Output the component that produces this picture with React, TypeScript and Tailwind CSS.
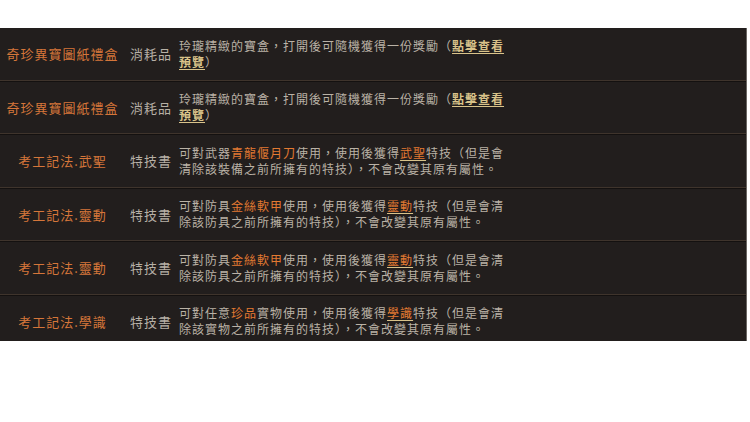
import type { ReactNode } from "react";

type Row = { name: string; kind: string; lines: [ReactNode, ReactNode] };

const hl = (t: string) => <span className="text-[#e27a32]">{t}</span>;
const link = (t: string) => (
  <span className="font-bold text-[#d9c38a] underline decoration-[#d9c38a] underline-offset-2">{t}</span>
);
const skill = (t: string) => (
  <span className="text-[#e27a32] underline decoration-[#d9c38a] underline-offset-2">{t}</span>
);

const gift: [ReactNode, ReactNode] = [
  <>玲瓏精緻的寶盒，打開後可隨機獲得一份獎勵（{link("點擊查看")}</>,
  <>{link("預覽")}）</>,
];

const ROWS: Row[] = [
  { name: "奇珍異寶圖紙禮盒", kind: "消耗品", lines: gift },
  { name: "奇珍異寶圖紙禮盒", kind: "消耗品", lines: gift },
  {
    name: "考工記法.武聖",
    kind: "特技書",
    lines: [
      <>可對武器{hl("青龍偃月刀")}使用，使用後獲得{skill("武聖")}特技（但是會</>,
      <>清除該裝備之前所擁有的特技），不會改變其原有屬性。</>,
    ],
  },
  {
    name: "考工記法.靈動",
    kind: "特技書",
    lines: [
      <>可對防具{hl("金絲軟甲")}使用，使用後獲得{skill("靈動")}特技（但是會清</>,
      <>除該防具之前所擁有的特技），不會改變其原有屬性。</>,
    ],
  },
  {
    name: "考工記法.靈動",
    kind: "特技書",
    lines: [
      <>可對防具{hl("金絲軟甲")}使用，使用後獲得{skill("靈動")}特技（但是會清</>,
      <>除該防具之前所擁有的特技），不會改變其原有屬性。</>,
    ],
  },
  {
    name: "考工記法.學識",
    kind: "特技書",
    lines: [
      <>可對任意{hl("珍品")}實物使用，使用後獲得{skill("學識")}特技（但是會清</>,
      <>除該實物之前所擁有的特技），不會改變其原有屬性。</>,
    ],
  },
];

export default function App() {
  return (
    <div
      className="h-[422px] w-[750px] bg-white pt-[28px]"
      style={{ fontFamily: '"Noto Sans CJK TC", "Noto Sans CJK SC", sans-serif' }}
    >
      <div className="h-[313px] w-[747px] overflow-hidden border-r border-[#6a6663] bg-[#221e1d]">
        {ROWS.map((r, i) => (
          <div key={i}>
            <div className="flex h-[51.5px] items-center">
              <div className="w-[125px] text-center text-[13px] tracking-[1px] text-[#d5763a]">{r.name}</div>
              <div className="w-[54px] pl-[5px] text-[13px] tracking-[1px] text-[#b7b0a6]">{r.kind}</div>
              <div className="flex w-[340px] flex-col text-[12px] leading-[16px] tracking-[1px] text-[#bab2a6]">
                <div className="whitespace-nowrap">{r.lines[0]}</div>
                <div className="whitespace-nowrap">{r.lines[1]}</div>
              </div>
            </div>
            <div className="h-px bg-[#3f342c]" />
            <div className="h-px bg-[#141110]" />
          </div>
        ))}
      </div>
    </div>
  );
}
